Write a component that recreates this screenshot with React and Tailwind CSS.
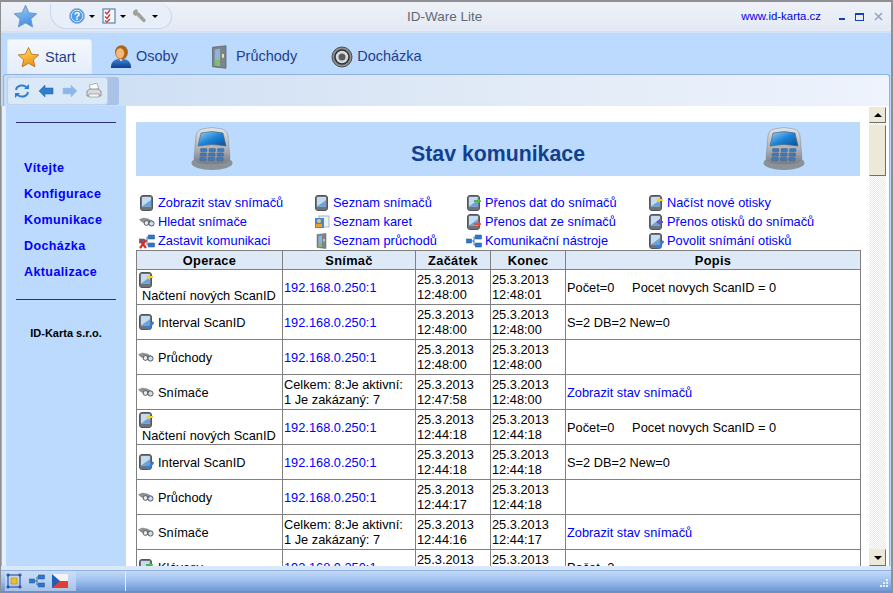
import React from "react";

const Star = ({ size = 24, from = "#ffe14d", to = "#f08a1c", stroke = "#b87a30", id = "s" }) => (
  <svg width={size} height={size} viewBox="0 0 24 24" className="shrink-0">
    <defs>
      <linearGradient id={id} x1="0.3" y1="0" x2="0.6" y2="1">
        <stop offset="0" stopColor={from} />
        <stop offset="1" stopColor={to} />
      </linearGradient>
    </defs>
    <path d="M12 1.500l3.200 7 7.500.8-5.600 5 1.600 7.500L12 18l-6.700 3.800 1.600-7.500-5.600-5 7.500-.8z" fill={`url(#${id})`} stroke={stroke} strokeWidth="1" strokeLinejoin="round" />
  </svg>
);

const BigDevice = ({ id }) => (
  <svg width="42" height="44" viewBox="0 0 42 44" className="shrink-0">
    <defs>
      <linearGradient id={`${id}a`} x1="0" y1="0" x2="0" y2="1">
        <stop offset="0" stopColor="#e2e6ea" /><stop offset="0.6" stopColor="#aab0b6" /><stop offset="1" stopColor="#767c82" />
      </linearGradient>
      <linearGradient id={`${id}b`} x1="0" y1="0" x2="1" y2="1">
        <stop offset="0" stopColor="#9ad0f2" /><stop offset="0.5" stopColor="#1e84d8" /><stop offset="1" stopColor="#0d4e94" />
      </linearGradient>
    </defs>
    <ellipse cx="21" cy="36" rx="20.500" ry="7" fill="#8a9197" />
    <path d="M11 2Q21 -1 31 2Q36 3 37 9L39 31Q39 37 21 37Q3 37 3 31L5 9Q6 3 11 2Z" fill={`url(#${id}a)`} stroke="#7d858c" strokeWidth="0.500" />
    <path d="M10 6Q21 3 32 6L35 19Q21 16 7 19Z" fill={`url(#${id}b)`} stroke="#55606a" strokeWidth="0.600" />
    {[0, 1, 2].map((r) =>
      [0, 1, 2].map((c) => (
        <rect key={`${r}${c}`} x={9.500 + c * 8.500 - r * 0.4} y={21.500 + r * 4.500} width="6.500" height="3.300" rx="0.800" fill="#3a7ac4" stroke="#4a5a6a" strokeWidth="0.400" />
      ))
    )}
  </svg>
);

const Dev = ({ badge }) => (
  <svg width="16" height="16" viewBox="0 0 16 16" className="shrink-0">
    <rect x="1.500" y="0.500" width="12" height="15" rx="2.500" fill="#6d7378" stroke="#50565a" />
    <rect x="3" y="2" width="9" height="9.500" rx="0.500" fill="#c4dcf2" />
    <path d="M3 11.500L12 5V11.500Z" fill="#6aa2dc" />
    {badge === "green" && <path d="M15.500 6L11.500 3v2H8v2h3.500v2z" fill="#48b848" />}
    {badge === "red" && <path d="M8 9h4V7l3.500 3-3.500 3v-2H8z" fill="#e05040" />}
    {badge === "yellow" && <path d="M8 5l4-3v2h3v2h-3v2z" fill="#f5cf3a" />}
    {badge === "purple" && <path d="M8 8l4-3v2h3v2h-3v2z" fill="#6a58b8" />}
    {badge === "check" && <path d="M8 12l2.500 2.500L15.500 8" fill="none" stroke="#3a80d8" strokeWidth="2.200" />}
  </svg>
);

const Binoc = () => (
  <svg width="16" height="16" viewBox="0 0 16 16" className="shrink-0">
    <path d="M.5 5.500l4-1.500 5 1 5 3-2 3-5-1-5-2.500z" fill="#8d9296" stroke="#666" strokeWidth="0.400" />
    <circle cx="7.500" cy="9" r="2.400" fill="#e6eaee" stroke="#4d4d4d" strokeWidth="0.900" />
    <circle cx="12.500" cy="9.500" r="2.600" fill="#c7def2" stroke="#4d4d4d" strokeWidth="0.900" />
  </svg>
);

const Net = ({ x }) => (
  <svg width="16" height="16" viewBox="0 0 16 16" className="shrink-0">
    <path d="M5 8h3M8 4v8M8 4h2M8 12h2" stroke="#3a6ea8" strokeWidth="1" fill="none" />
    <rect x="0.500" y="6" width="5" height="4" fill="#2a78d0" stroke="#1a5098" strokeWidth="0.500" />
    <rect x="9.500" y="2" width="6" height="4" fill="#2a78d0" stroke="#1a5098" strokeWidth="0.500" />
    <rect x="9.500" y="10" width="6" height="4" fill="#2a78d0" stroke="#1a5098" strokeWidth="0.500" />
    {x && <path d="M1 7l6 8M7 7l-6 8" stroke="#d83020" strokeWidth="2.200" />}
  </svg>
);

const Cards = () => (
  <svg width="16" height="16" viewBox="0 0 16 16" className="shrink-0">
    <rect x="5" y="2" width="10" height="11" fill="#eef2f6" stroke="#8c9aa8" strokeWidth="0.700" />
    <rect x="1" y="4" width="9" height="10" fill="#3f8ad8" />
    <circle cx="5" cy="7" r="2" fill="#f0c060" />
    <rect x="2" y="10" width="6" height="3" fill="#e8a030" />
  </svg>
);

const Door = ({ size = 16 }) => (
  <svg width={size} height={size} viewBox="0 0 16 16" className="shrink-0">
    <path d="M3 1.500L12 .5V15.500L3 14.500Z" fill="#7c858c" stroke="#5a6268" strokeWidth="0.500" />
    <path d="M4.500 3L8 2.500V14L4.500 13.500Z" fill="#8fb4dc" />
    <rect x="4.500" y="10" width="3.500" height="3.500" fill="#7cc060" />
    <rect x="9.300" y="6" width="1.400" height="2.500" fill="#e8e0a0" />
  </svg>
);

const Person = () => (
  <svg width="22" height="24" viewBox="0 0 24 26" className="shrink-0">
    <defs>
      <linearGradient id="pb" x1="0" y1="0" x2="0" y2="1"><stop offset="0" stopColor="#3f84d8" /><stop offset="1" stopColor="#0f3f8c" /></linearGradient>
    </defs>
    <path d="M1 25c0-7 4-10 11-10s11 3 11 10z" fill="url(#pb)" />
    <path d="M10 15l2 3 2-3z" fill="#fff" />
    <ellipse cx="12.500" cy="8" rx="7" ry="7.800" fill="#a9661f" />
    <ellipse cx="11" cy="9" rx="4.500" ry="5.500" fill="#f4b878" />
  </svg>
);

const Clock = () => (
  <svg width="22" height="22" viewBox="0 0 22 22" className="shrink-0">
    <circle cx="11" cy="11" r="10" fill="#8a8e90" stroke="#4a4e50" />
    <circle cx="11" cy="11" r="7" fill="#d6dadc" stroke="#2e3234" strokeWidth="1.500" />
    <circle cx="11" cy="11" r="3.500" fill="#585c5e" />
  </svg>
);

const Caret = ({ className = "" }) => <span className={`h-0 w-0 border-x-[3px] border-t-[3px] border-x-transparent border-t-black ${className}`} />;

const QuickIcons = () => (
  <div className="flex items-center">
    <svg width="16" height="16" viewBox="0 0 16 16" className="shrink-0">
      <circle cx="8" cy="8" r="7.500" fill="#3f8be0" stroke="#9db8d8" />
      <circle cx="8" cy="8" r="5.800" fill="#4f9aec" stroke="#fff" strokeWidth="0.800" />
      <text x="8" y="12" textAnchor="middle" fontSize="10.500" fontWeight="700" fill="#fff" fontFamily="Liberation Sans, sans-serif">?</text>
    </svg>
    <Caret className="ml-[4px]" />
    <svg width="14" height="16" viewBox="0 0 14 16" className="ml-[7px] shrink-0">
      <rect x="1" y="1" width="12" height="14" fill="#f4f8fc" stroke="#3a6ea8" />
      <path d="M3 4l2 2 3-4M3 8.500l2 2 3-4M3 12.500l2 1.500 3-3" fill="none" stroke="#d8302a" strokeWidth="1.300" />
    </svg>
    <Caret className="ml-[4px]" />
    <svg width="16" height="16" viewBox="0 0 16 16" className="ml-[6px] shrink-0">
      <path d="M1.500 3.500L4 1.500l1.500 1-.5 2 2 .5 6 6.500c1 1.500-.5 3-2 2L4.500 7 3 7.500 1.500 6z" fill="#a3a39d" stroke="#7f7f78" strokeWidth="0.500" />
    </svg>
    <Caret className="ml-[4px]" />
  </div>
);

const Tab = ({ icon, label, active, className = "" }) => (
  <div className={`flex h-[35px] items-center rounded-t-[3px] ${active ? "w-[85px] gap-[5px] border border-b-0 border-[#dfeafa] bg-linear-to-b from-[#f5f8fd] to-[#e3edfb] pl-[9px]" : "gap-[4px] px-[10px]"} ${className}`}>
    {icon}
    <span className="text-[14.500px] text-[#1f3f8f]">{label}</span>
  </div>
);

const ToolBtn = ({ dir, light }) => (
  <svg width="16" height="14" viewBox="0 0 16 14" className="shrink-0">
    <path d={dir === "l" ? "M1 7l6-6v3h8v6H7v3z" : "M15 7L9 1v3H1v6h8v3z"} fill={light ? "#8ab8ea" : "#2f7fd0"} stroke={light ? "#9cc0e8" : "#1a5aa0"} strokeWidth="0.500" />
  </svg>
);

const links = [
  [[<Dev />, "Zobrazit stav snímačů"], [<Binoc />, "Hledat snímače"], [<Net x />, "Zastavit komunikaci"]],
  [[<Dev />, "Seznam snímačů"], [<Cards />, "Seznam karet"], [<Door />, "Seznam průchodů"]],
  [[<Dev badge="green" />, "Přenos dat do snímačů"], [<Dev badge="red" />, "Přenos dat ze snímačů"], [<Net />, "Komunikační nástroje"]],
  [[<Dev badge="yellow" />, "Načíst nové otisky"], [<Dev badge="purple" />, "Přenos otisků do snímačů"], [<Dev badge="check" />, "Povolit snímání otisků"]],
];
const colW = ["w-[175px]", "w-[152px]", "w-[182px]", "w-[190px]"];

const IP = "192.168.0.250:1";
const POCET = "Počet=0\u00a0\u00a0\u00a0\u00a0\u00a0Pocet novych ScanID = 0";
const rows = [
  { op: "nacteni", snimac: IP, a: ["25.3.2013", "12:48:00"], b: ["25.3.2013", "12:48:01"], popis: POCET },
  { op: "interval", snimac: IP, a: ["25.3.2013", "12:48:00"], b: ["25.3.2013", "12:48:00"], popis: "S=2 DB=2 New=0" },
  { op: "pruchody", snimac: IP, a: ["25.3.2013", "12:48:00"], b: ["25.3.2013", "12:48:00"], popis: "" },
  { op: "snimace", a: ["25.3.2013", "12:47:58"], b: ["25.3.2013", "12:48:00"], link: true },
  { op: "nacteni", snimac: IP, a: ["25.3.2013", "12:44:18"], b: ["25.3.2013", "12:44:18"], popis: POCET },
  { op: "interval", snimac: IP, a: ["25.3.2013", "12:44:18"], b: ["25.3.2013", "12:44:18"], popis: "S=2 DB=2 New=0" },
  { op: "pruchody", snimac: IP, a: ["25.3.2013", "12:44:17"], b: ["25.3.2013", "12:44:18"], popis: "" },
  { op: "snimace", a: ["25.3.2013", "12:44:16"], b: ["25.3.2013", "12:44:17"], link: true },
  { op: "klavesy", snimac: IP, a: ["25.3.2013", "12:44:16"], b: ["25.3.2013", "12:44:16"], popis: "Počet=2" },
];

const Op = ({ op }) => {
  if (op === "nacteni")
    return (
      <div className="leading-[15px]">
        <div className="h-[15px]"><Dev badge="yellow" /></div>
        <div className="whitespace-nowrap pl-[4px] pt-[1px]">Načtení nových ScanID</div>
      </div>
    );
  const m = {
    interval: [<Dev badge="check" />, "Interval ScanID"],
    pruchody: [<Binoc />, "Průchody"],
    snimace: [<Binoc />, "Snímače"],
    klavesy: [<Dev badge="green" />, "Klávesy"],
  }[op];
  return <div className="flex items-center gap-[4px]">{m[0]}<span>{m[1]}</span></div>;
};

const Cell = ({ children, className = "" }) => (
  <td className={`h-[35px] overflow-hidden border border-[#808080] p-0 pl-[1px] align-middle ${className}`}>{children}</td>
);

const Dates = ({ d }) => <div className="whitespace-nowrap">{d[0]}<br />{d[1]}</div>;

export default function App() {
  return (
    <div className="relative flex h-[593px] w-[893px] flex-col overflow-hidden border-t-2 border-r-2 border-l border-[#8e9094] bg-[#bcdafe] font-['Liberation_Sans',sans-serif] text-[12.800px] leading-[15px] text-black">
      {/* title bar */}
      <div className="relative flex h-[31px] shrink-0 items-center border-b-2 border-[#d3e2f5] bg-linear-to-b from-[#eef1f7] to-[#e3e9f4]">
        <div className="ml-[12px]"><Star size={25} from="#9cc8f4" to="#3d8be0" stroke="#6a9ad0" id="s1" /></div>
        <div className="ml-[12px] flex h-[25px] w-[122px] items-center rounded-r-[14px] rounded-bl-[18px] border border-t-0 border-[#c6d6ec] bg-[#e9eff8] pl-[18px]">
          <QuickIcons />
        </div>
        <div className="flex-1 pr-[24px] text-center text-[13.500px] text-[#5f6a78]">ID-Ware Lite</div>
        <a className="mr-[18px] text-[11.400px] text-[#0000e6]">www.id-karta.cz</a>
        <div className="mr-[8px] flex items-center gap-[10px]">
          <span className="mt-[4px] h-[2px] w-[6px] bg-[#1840b0]" />
          <span className="h-[8px] w-[9px] border border-t-2 border-[#1840b0]" />
          <svg width="9" height="9" viewBox="0 0 9 9"><path d="M1 1l7 7M8 1l-7 7" stroke="#8fa6c4" strokeWidth="1.500" /></svg>
        </div>
      </div>
      {/* ribbon tabs */}
      <div className="flex h-[41px] shrink-0 items-end gap-[8px] pl-[6px]">
        <Tab active icon={<Star size={23} id="s2" />} label="Start" />
        <Tab icon={<Person />} label="Osoby" />
        <Tab className="ml-[2px]" icon={<Door size={24} />} label="Průchody" />
        <Tab className="ml-[6px]" icon={<Clock />} label="Docházka" />
      </div>
      {/* toolbar */}
      <div className="ml-[2px] mr-[1px] flex h-[32px] shrink-0 items-center rounded-t-[3px] border border-b-0 border-[#8eb2e4] bg-linear-to-r from-[#c9dcf4] via-[#dfe9f6] to-[#eef3fd] pl-[3px]">
        <div className="flex h-[28px] w-[112px] rounded-[3px] bg-[#a9c2e6]">
          <div className="flex h-[28px] w-[101px] items-center gap-[8px] rounded-[3px] border border-[#c0d2ea] bg-[#dbe8f7] pl-[6px]">
            <svg width="16" height="16" viewBox="0 0 16 16" className="shrink-0">
              <path d="M2 7a6 5.500 0 0 1 11-2M14 9a6 5.500 0 0 1-11 2" fill="none" stroke="#2f7fd0" strokeWidth="2" />
              <path d="M15 1v5h-5zM1 15v-5h5z" fill="#2f7fd0" />
            </svg>
            <ToolBtn dir="l" />
            <ToolBtn dir="r" light />
            <svg width="16" height="16" viewBox="0 0 16 16" className="shrink-0">
              <rect x="4" y="1" width="8" height="6" fill="#fff" stroke="#999" strokeWidth="0.700" transform="rotate(-15 8 4)" />
              <path d="M1 8l3-2h8l3 2v5H1z" fill="#d8dadc" stroke="#707478" strokeWidth="0.700" />
              <rect x="3" y="11" width="10" height="3" fill="#f4f5f6" stroke="#707478" strokeWidth="0.500" />
            </svg>
          </div>
        </div>
      </div>
      {/* body */}
      <div className="mr-[1px] flex h-[460px] shrink-0 overflow-hidden border-x border-[#8eb2e4] bg-white">
        <div className="w-[4px] shrink-0 bg-[#e6effb]" />
        <aside className="flex w-[120px] shrink-0 flex-col bg-[#bcdafe] pl-[10px]">
          <div className="mt-[16px] h-px w-[100px] bg-[#2b2f7c]" />
          <nav className="mt-[37px] flex flex-col gap-[10px] pl-[8px] text-[12.500px] leading-[16px] font-bold tracking-[0.4px] text-[#0000ff]">
            {["Vítejte", "Konfigurace", "Komunikace", "Docházka", "Aktualizace"].map((t) => <a key={t}>{t}</a>)}
          </nav>
          <div className="mt-[19px] h-px w-[100px] bg-[#2b2f7c]" />
          <div className="mt-[26px] w-[100px] text-center text-[11px] font-bold">ID-Karta s.r.o.</div>
        </aside>
        <main className="min-w-0 flex-1 overflow-hidden pl-[10px] pt-[16px]">
          <div className="flex h-[54px] w-[724px] items-center bg-[#bcdafe] pl-[55px]">
            <BigDevice id="d1" />
            <h1 className="w-[530px] pt-[10px] text-center text-[21.300px] leading-[24px] font-bold text-[#12408f]">Stav komunikace</h1>
            <BigDevice id="d2" />
          </div>
          <div className="mt-[17px] flex pl-[3px]">
            {links.map((col, i) => (
              <div key={i} className={`flex flex-col ${colW[i]}`}>
                {col.map(([ic, t]) => (
                  <div key={t} className="flex h-[19px] items-center gap-[3px] whitespace-nowrap text-[#0000ff]">{ic}<a>{t}</a></div>
                ))}
              </div>
            ))}
          </div>
          <table className="w-[724px] table-fixed border-collapse">
            <colgroup>
              <col className="w-[146px]" /><col className="w-[133px]" /><col className="w-[75px]" /><col className="w-[75px]" /><col className="w-[295px]" />
            </colgroup>
            <thead>
              <tr className="h-[19px] bg-[#dde9f6]">
                {["Operace", "Snímač", "Začátek", "Konec", "Popis"].map((h) => (
                  <th key={h} className="border border-[#808080] p-0 text-center text-[12.800px] font-bold tracking-[0.3px]">{h}</th>
                ))}
              </tr>
            </thead>
            <tbody>
              {rows.map((r, i) => (
                <tr key={i}>
                  <Cell><Op op={r.op} /></Cell>
                  <Cell className={r.snimac ? "text-[#0000ff]" : ""}>
                    {r.snimac || <>Celkem: 8:Je aktivní:<br />1 Je zakázaný: 7</>}
                  </Cell>
                  <Cell><Dates d={r.a} /></Cell>
                  <Cell><Dates d={r.b} /></Cell>
                  <Cell className={r.link ? "text-[#0000ff]" : ""}>{r.link ? "Zobrazit stav snímačů" : r.popis}</Cell>
                </tr>
              ))}
            </tbody>
          </table>
        </main>
        {/* scrollbar */}
        <div className="mr-[3px] mt-[1px] flex w-[17px] shrink-0 flex-col bg-[repeating-conic-gradient(#ece9d8_0_25%,#fff_0_50%)] bg-size-[2px_2px]">
          <div className="flex h-[16px] items-center justify-center border border-[#ece9d8] border-r-[#716f64] border-b-[#716f64] bg-[#ece9d8]">
            <span className="h-0 w-0 border-x-[4px] border-b-[4px] border-x-transparent border-b-black" />
          </div>
          <div className="mt-[2px] h-[51px] border border-[#ece9d8] border-r-[#716f64] border-b-[#716f64] bg-[#ece9d8]" />
          <div className="flex-1" />
          <div className="flex h-[17px] items-center justify-center border border-[#ece9d8] border-r-[#716f64] border-b-[#716f64] bg-[#ece9d8]">
            <span className="h-0 w-0 border-x-[4px] border-t-[4px] border-x-transparent border-t-black" />
          </div>
        </div>
      </div>
      {/* status bar */}
      <div className="flex h-[5px] shrink-0 border-b border-[#8eb2e4] bg-[#dbe8fa]" />
      <div className="flex h-[22px] shrink-0 items-center border-b-2 border-b-[#6f8fbf] bg-linear-to-b from-[#c4daf6] via-[#9dbfee] to-[#6f97d4] pl-[4px]">
        <div className="flex h-[20px] w-[71px] items-center gap-[7px] bg-[#cfe0f6]/60 pl-[1px]">
          <svg width="16" height="16" viewBox="0 0 16 16" className="shrink-0">
            <rect x="2" y="2" width="12" height="12" fill="none" stroke="#1a3f90" />
            <path d="M0 2h4M2 0v4M12 2h4M14 0v4M0 14h4M2 12v4M12 14h4M14 12v4" stroke="#1a3f90" strokeWidth="0.800" />
            <rect x="5" y="5" width="6" height="6" fill="#f0c020" stroke="#a08010" strokeWidth="0.500" />
          </svg>
          <Net />
          <svg width="16" height="14" viewBox="0 0 16 14" className="shrink-0">
            <rect width="16" height="7" fill="#f4f4f4" />
            <rect y="7" width="16" height="7" fill="#e04030" />
            <path d="M0 0l8 7-8 7z" fill="#1f5fb8" />
          </svg>
        </div>
        <div className="ml-[49px] h-[20px] w-px bg-[#e6f0fc]" />
        <div className="flex-1" />
        <svg width="12" height="12" viewBox="0 0 12 12" className="mr-[2px] mb-[1px] shrink-0 self-end" fill="#e8f0fb">
          <rect x="9" y="1" width="2" height="2" /><rect x="6" y="4" width="2" height="2" /><rect x="9" y="4" width="2" height="2" />
          <rect x="3" y="7" width="2" height="2" /><rect x="6" y="7" width="2" height="2" /><rect x="9" y="7" width="2" height="2" />
        </svg>
      </div>
    </div>
  );
}
